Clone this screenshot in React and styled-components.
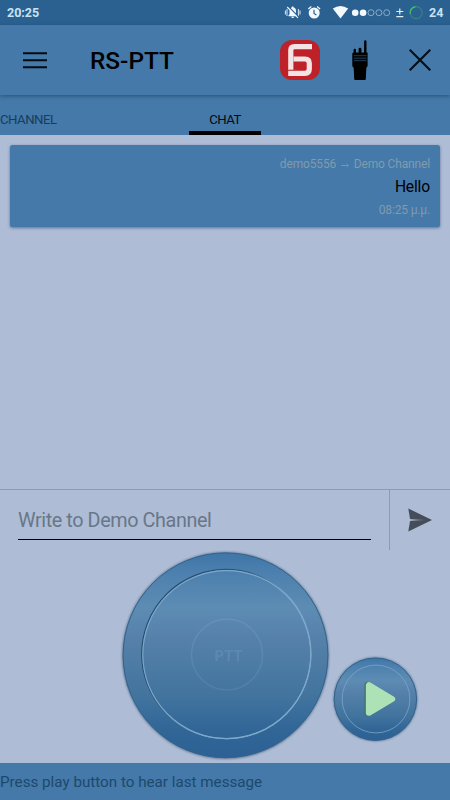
import styled, { createGlobalStyle } from "styled-components";

const App = () => {
  return (
    <>
      <GlobalStyle />
      <Screen>
        <StatusBar>
          <Clock>20:25</Clock>
          <StatusIcons />
          <Battery>24</Battery>
        </StatusBar>
        <Toolbar>
          <MenuIcon />
          <Title>RS-PTT</Title>
          <LogoIcon />
          <RadioIcon />
          <CloseIcon />
        </Toolbar>
        <Tabs>
          <Tab $width={189}>CHANNEL</Tab>
          <Tab $width={72} $active>
            CHAT
          </Tab>
        </Tabs>
        <Messages>
          <Message>
            <Route>
              demo5556 <Arrow /> Demo Channel
            </Route>
            <Body>Hello</Body>
            <Time>08:25 μ.μ.</Time>
          </Message>
        </Messages>
        <Composer>
          <Field>
            <Placeholder>Write to Demo Channel</Placeholder>
          </Field>
          <Send>
            <SendIcon />
          </Send>
        </Composer>
        <Controls>
          <PttButton />
          <PlayButton />
        </Controls>
        <Footer>
          <Hint>Press play button to hear last message</Hint>
        </Footer>
      </Screen>
    </>
  );
};

export default App;

/**Muted bell, alarm, wifi, signal dots, plus/minus and the battery ring */
const StatusIcons = () => (
  <StatusSvg width="140" height="25" viewBox="284 0 140 25">
    <g fill="#f2f8fb">
      <path d="M288.5 16.2v-1l1-1v-3.3c0-2.1 1-3.3 2.5-3.7v-.7h1.4v.7c1.6.4 2.6 1.6 2.6 3.7v3.3l1 1v1zM291.4 16.8h2.6c0 1.7-2.6 1.7-2.6 0z" />
      <path d="M287 9v7M298.4 9v7M285.4 10.5v4M300 10.5v4" stroke="#dcebf5" strokeWidth="1" />
      <path d="M288 6.2l11 11" stroke="#2a6191" strokeWidth="1.3" />
      <path d="M287.2 7l10.8 10.8" stroke="#f2f8fb" strokeWidth="1.1" />
      <circle cx="314.2" cy="13" r="5.5" />
      <path d="M308.3 9l3-2.4M320.1 9l-3-2.4" stroke="#f2f8fb" strokeWidth="1.3" />
      <path d="M314 9.8v3.6l2.4 1.5" fill="none" stroke="#2a6191" strokeWidth="1.2" />
      <path d="M332.8 8.6q7.7-5 15.4 0l-7.7 9.9z" />
      <circle cx="355.2" cy="12.7" r="3.3" />
      <circle cx="363.1" cy="12.7" r="3.3" />
    </g>
    <g fill="none" stroke="#9fbdd3" strokeWidth="0.8">
      <circle cx="371" cy="12.7" r="3" />
      <circle cx="378.9" cy="12.7" r="3" />
      <circle cx="386.7" cy="12.7" r="3" />
    </g>
    <path d="M396.3 11.5h7M399.8 8.4v6.2M396.3 16.6h7" stroke="#e3eef5" strokeWidth="1.2" />
    <circle cx="416.2" cy="12.6" r="6" fill="none" stroke="#3a8481" strokeWidth="1.1" />
    <path d="M410.3 14a6 6 0 0 1 5-7.3" fill="none" stroke="#35c46c" strokeWidth="1.4" />
  </StatusSvg>
);

const MenuIcon = () => (
  <MenuSvg width="24" height="17" viewBox="0 0 24 17">
    <path d="M0 1.3h24M0 8.2h24M0 15.2h24" stroke="#050b10" strokeWidth="2" />
  </MenuSvg>
);

const LogoIcon = () => (
  <LogoSvg width="40" height="40" viewBox="0 0 40 40">
    <rect width="40" height="40" rx="12" fill="#bf2128" />
    <path
      d="M32 6.6H14.5q-3.7 0-3.7 3.7V30"
      fill="none"
      stroke="#f3e3e4"
      strokeWidth="5.2"
    />
    <path
      d="M13.5 19H25q4.3 0 4.3 4.3v5.5q0 4.5-4.3 4.5H8.2"
      fill="none"
      stroke="#f3e3e4"
      strokeWidth="5.2"
    />
    <path d="M8.2 30h9" stroke="#c54d53" strokeWidth="0.7" />
  </LogoSvg>
);

const RadioIcon = () => (
  <RadioSvg width="16" height="40" viewBox="0 0 16 40">
    <path d="M12.1 13V1.5q0-1.3 1.2-1.3t1.2 1.3V13zM1.6 13V9.8q0-1 1.2-1T4 9.8V13zM6.6 13V9q0-1.2 1.4-1.2T9.4 9v4z" />
    <path d="M1.2 12.5h14.4V26l-1.3 2-.5 11q0 1-1 1H3.2q-1 0-1-1L1.7 28 .3 26V14q0-1.5.9-1.5z" />
    <path d="M1.8 15.7h12.8M1.8 18.2h12.8M1.8 20.7h12.8" stroke="#284c6c" strokeWidth="0.8" />
  </RadioSvg>
);

const CloseIcon = () => (
  <svg width="22" height="22" viewBox="0 0 22 22">
    <path d="M0.7 0.7l20.6 20.6M21.3 0.7L0.7 21.3" stroke="#050e16" strokeWidth="2.1" />
  </svg>
);

const Arrow = () => (
  <ArrowSvg width="8" height="5" viewBox="0 0 8 5">
    <path d="M0 2.5h7.4M5.6 1l1.8 1.5L5.6 4" fill="none" stroke="#819bae" strokeWidth="0.8" />
  </ArrowSvg>
);

const SendIcon = () => (
  <svg width="24" height="24" viewBox="0 0 24 24">
    <defs>
      <linearGradient id="slit" gradientUnits="userSpaceOnUse" x1="2" y1="0" x2="20" y2="0">
        <stop offset="0" stopColor="#aebcd5" />
        <stop offset="1" stopColor="#444d59" />
      </linearGradient>
    </defs>
    <path d="M0.3 0.4L24 12 0.3 23.6 2.2 12z" fill="#444d59" />
    <path d="M1.6 11L19 12 1.6 13z" fill="url(#slit)" />
  </svg>
);

const PttButton = () => (
  <PttSvg width="214" height="212" viewBox="118 550 214 212">
    <defs>
      <linearGradient id="face" x1="0" y1="0" x2="0" y2="1">
        <stop offset="0" stopColor="#3f76a8" />
        <stop offset="0.12" stopColor="#4f82af" />
        <stop offset="0.27" stopColor="#5d8cb3" />
        <stop offset="0.42" stopColor="#5580aa" />
        <stop offset="0.55" stopColor="#4c7ba4" />
        <stop offset="0.7" stopColor="#42749e" />
        <stop offset="0.86" stopColor="#316697" />
        <stop offset="1" stopColor="#2d6195" />
      </linearGradient>
      <linearGradient id="groove" x1="0.1" y1="0.25" x2="0.9" y2="0.75">
        <stop offset="0" stopColor="#244c70" />
        <stop offset="0.35" stopColor="#315c82" />
        <stop offset="0.65" stopColor="#7ca8cd" />
        <stop offset="1" stopColor="#82aed3" />
      </linearGradient>
      <linearGradient id="hub" x1="0" y1="0" x2="0" y2="1">
        <stop offset="0" stopColor="#6894b9" />
        <stop offset="1" stopColor="#5282aa" />
      </linearGradient>
      <filter id="soft" x="-10%" y="-10%" width="120%" height="120%">
        <feGaussianBlur stdDeviation="1.2" />
      </filter>
    </defs>
    <circle cx="225.5" cy="655.5" r="103.4" fill="#5a7692" filter="url(#soft)" />
    <circle cx="225.5" cy="655.3" r="102.4" fill="url(#face)" stroke="#33628a" strokeWidth="1" />
    <circle cx="226.3" cy="654" r="84.6" fill="none" stroke="url(#groove)" strokeWidth="1.2" />
    <circle cx="226.8" cy="654.6" r="84" fill="none" stroke="#7da8cb" strokeWidth="1.1" />
    <circle cx="227" cy="654.5" r="35.5" fill="none" stroke="url(#hub)" strokeWidth="1.4" opacity="0.8" />
    <PttLabel x="214.5" y="660.6" textLength="28">
      PTT
    </PttLabel>
  </PttSvg>
);

const PlayButton = () => (
  <PlaySvg width="90" height="90" viewBox="330 654 90 90">
    <circle cx="375.4" cy="699.3" r="42" fill="#5a7692" filter="url(#soft)" />
    <circle cx="375.4" cy="699.2" r="41.2" fill="url(#face)" stroke="#33628a" strokeWidth="1" />
    <circle cx="376" cy="699" r="33.9" fill="none" stroke="#7ba5c9" strokeWidth="0.8" />
    <path d="M367.5 685v28l24-14z" fill="#41705f" stroke="#41705f" strokeWidth="6" strokeLinejoin="round" />
    <path d="M368.8 685.2v27.6l23.4-13.8z" fill="#ade2b6" stroke="#ade2b6" strokeWidth="6" strokeLinejoin="round" />
  </PlaySvg>
);

const GlobalStyle = createGlobalStyle`
  body {
    margin: 0;
    font-family: Roboto, sans-serif;
  }
  svg {
    display: block;
    flex-shrink: 0;
  }
`;

const Screen = styled.div`
  display: flex;
  flex-direction: column;
  width: 450px;
  height: 800px;
  overflow: hidden;
  background-color: #aebcd6;
`;

const StatusBar = styled.div`
  display: flex;
  align-items: center;
  height: 25px;
  background-color: #2a6191;
  color: #c9e3f4;
  font-size: 12.5px;
  font-weight: 700;
`;

const Clock = styled.div`
  margin-left: 7px;
`;

const StatusSvg = styled.svg`
  margin-left: auto;
`;

const Battery = styled.div`
  width: 21px;
  padding-left: 5px;
`;

const Toolbar = styled.div`
  position: relative;
  display: flex;
  align-items: center;
  height: 70px;
  padding: 0 19px 0 23px;
  box-sizing: border-box;
  background-color: #4479a9;
  box-shadow: 0 1px 4px rgba(20, 50, 80, 0.55);
`;

const MenuSvg = styled.svg`
  margin-right: 43px;
`;

const Title = styled.div`
  flex: 1;
  color: #000;
  font-size: 24.4px;
  font-weight: 500;
  line-height: 32px;
  margin-top: 2px;
`;

const LogoSvg = styled.svg`
  margin-right: 32px;
`;

const RadioSvg = styled.svg`
  margin-right: 41px;
`;

const Tabs = styled.div`
  display: flex;
  height: 40px;
  background-color: #4479a9;
`;

const Tab = styled.div`
  display: flex;
  align-items: center;
  justify-content: ${(props) => (props.$active ? "center" : "flex-start")};
  width: ${(props) => props.$width}px;
  padding-top: 12px;
  border-bottom: 4px solid ${(props) => (props.$active ? "#000" : "transparent")};
  box-sizing: border-box;
  color: ${(props) => (props.$active ? "#04090d" : "#173d5e")};
  font-size: 13.2px;
  letter-spacing: -0.5px;
`;

const Messages = styled.div`
  flex: 1;
  padding: 10px;
`;

const Message = styled.div`
  display: flex;
  flex-direction: column;
  align-items: flex-end;
  height: 82px;
  padding: 10px 10px 0;
  box-sizing: border-box;
  border-radius: 2.5px;
  background-color: #4479a9;
  box-shadow: 0 1px 3px rgba(40, 65, 100, 0.6);
`;

const Route = styled.div`
  display: flex;
  align-items: center;
  white-space: pre;
  height: 18px;
  color: #819bae;
  font-size: 12px;
  letter-spacing: -0.15px;
`;

const ArrowSvg = styled.svg`
  margin: 3px 2px 0;
`;

const Body = styled.div`
  color: #000;
  font-size: 15.6px;
  line-height: 28px;
  letter-spacing: -0.15px;
`;

const Time = styled.div`
  color: #819bae;
  font-size: 12px;
  line-height: 19px;
  letter-spacing: -0.15px;
`;

const Composer = styled.div`
  display: flex;
  height: 61px;
  box-sizing: border-box;
  border-top: 1px solid #8a9cb6;
`;

const Field = styled.div`
  flex: 1;
  padding: 12px 18px 0;
`;

const Placeholder = styled.div`
  height: 37px;
  border-bottom: 1px solid #000;
  color: #687788;
  font-size: 19.8px;
  line-height: 37px;
  letter-spacing: -0.4px;
`;

const Send = styled.div`
  display: flex;
  align-items: center;
  width: 61px;
  padding-left: 18px;
  box-sizing: border-box;
  border-left: 1px solid #8a9cb6;
`;

const Controls = styled.div`
  display: flex;
  align-items: flex-start;
  height: 213px;
`;

const PttSvg = styled.svg`
  margin-left: 118px;
`;

const PlaySvg = styled.svg`
  margin: 104px 0 0 -2px;
`;

const PttLabel = styled.text`
  fill: #638fb5;
  font-size: 14.5px;
  font-weight: 700;
  opacity: 0.65;
`;

const Footer = styled.div`
  display: flex;
  align-items: center;
  height: 37px;
  background-color: #4479a9;
`;

const Hint = styled.div`
  margin-top: 1px;
  color: #1d496d;
  font-size: 15.2px;
`;
